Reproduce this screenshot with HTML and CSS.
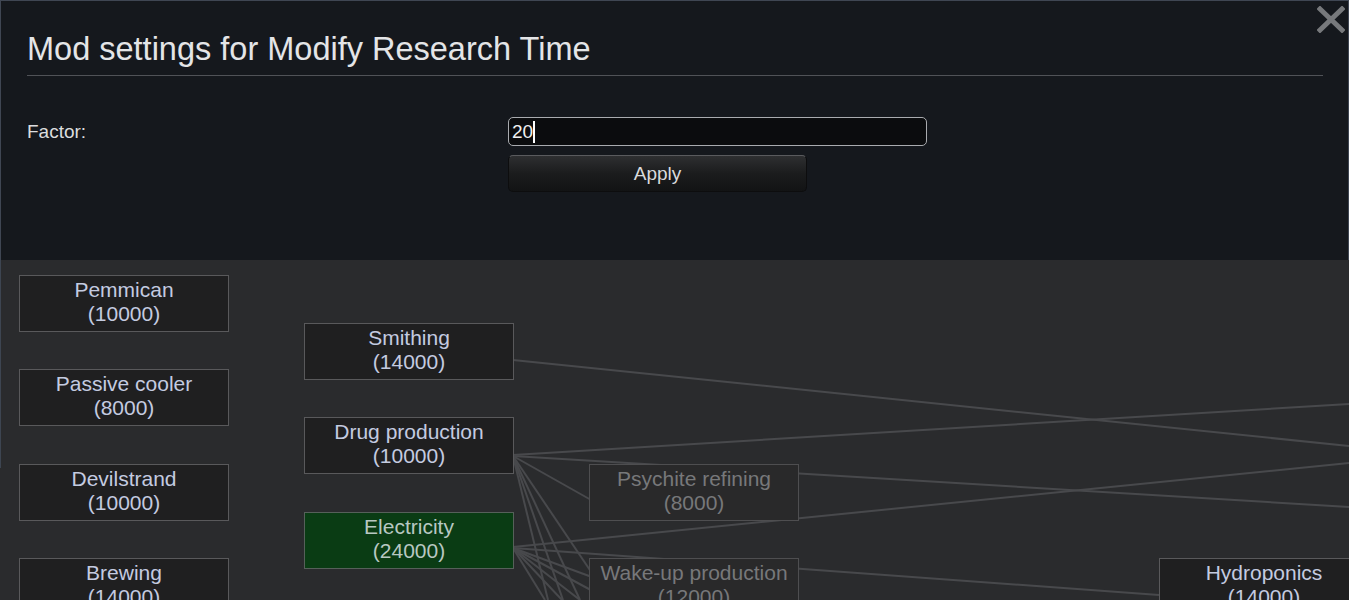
FILE: index.html
```html
<!DOCTYPE html>
<html>
<head>
<meta charset="utf-8">
<link rel="stylesheet" href="styles.css">
</head>
<body>
<div class="tree">
  <svg class="links" width="1349" height="600" viewBox="0 0 1349 600">
    <g stroke="#48494c" stroke-width="2" fill="none">
      <line x1="513" y1="360" x2="1349" y2="446"/>
      <line x1="513" y1="455" x2="1349" y2="404"/>
      <line x1="513" y1="456" x2="1349" y2="507"/>
      <line x1="513" y1="547" x2="1349" y2="463"/>
      <line x1="513" y1="548" x2="1159" y2="595"/>
      <line x1="513" y1="456" x2="600" y2="505"/>
      <line x1="513" y1="456" x2="548" y2="600"/>
      <line x1="513" y1="456" x2="563" y2="600"/>
      <line x1="513" y1="456" x2="580" y2="600"/>
      <line x1="513" y1="456" x2="600" y2="585"/>
      <line x1="513" y1="548" x2="545" y2="600"/>
      <line x1="513" y1="548" x2="562" y2="600"/>
      <line x1="513" y1="548" x2="580" y2="600"/>
      <line x1="513" y1="548" x2="600" y2="595"/>
      <line x1="513" y1="548" x2="600" y2="580"/>
    </g>
  </svg>

  <div class="node n-c1 n-r1">Pemmican<br>(10000)</div>
  <div class="node n-c1 n-r2">Passive cooler<br>(8000)</div>
  <div class="node n-c1 n-r3">Devilstrand<br>(10000)</div>
  <div class="node n-c1 n-r4">Brewing<br>(14000)</div>

  <div class="node n-c2 n-s1">Smithing<br>(14000)</div>
  <div class="node n-c2 n-s2">Drug production<br>(10000)</div>
  <div class="node n-c2 n-s3 done">Electricity<br>(24000)</div>

  <div class="node n-c3 n-r3 locked">Psychite refining<br>(8000)</div>
  <div class="node n-c3 n-r4 locked">Wake-up production<br>(12000)</div>

  <div class="node n-c5 n-r4">Hydroponics<br>(14000)</div>

  <div class="edge-line"></div>
</div>

<div class="dialog">
  <div class="dialog-head">
    <h1 class="title">Mod settings for Modify Research Time</h1>
  </div>
  <div class="form">
    <label class="label">Factor:</label>
    <div class="controls">
      <div class="input"><span class="value">20</span><span class="caret"></span></div>
      <button class="btn">Apply</button>
    </div>
  </div>
  <div class="close">
    <svg width="28" height="27" viewBox="0 0 28 27">
      <path d="M3 3 L25 24 M25 3 L3 24" stroke="#77797c" stroke-width="5" stroke-linecap="square" fill="none"/>
    </svg>
  </div>
</div>
</body>
</html>
```

FILE: styles.css
```css
html, body {
  margin: 0;
  padding: 0;
}
body {
  width: 1349px;
  height: 600px;
  overflow: hidden;
  background: #2a2b2d;
  font-family: "Liberation Sans", Arial, sans-serif;
  position: relative;
}
.tree {
  position: relative;
  width: 1349px;
  height: 600px;
}
.links {
  position: absolute;
  left: 0;
  top: 0;
}
.node {
  position: absolute;
  width: 208px;
  height: 52px;
  padding-bottom: 3px;
  border: 1px solid #59595b;
  background: #1f1f20;
  color: #c4cbe0;
  font-size: 21px;
  line-height: 24px;
  text-align: center;
  display: flex;
  align-items: center;
  justify-content: center;
  white-space: nowrap;
}
.n-c1 { left: 19px; }
.n-c2 { left: 304px; }
.n-c3 { left: 589px; }
.n-c5 { left: 1159px; }
.n-r1 { top: 275px; }
.n-r2 { top: 369px; }
.n-r3 { top: 464px; }
.n-r4 { top: 558px; }
.n-s1 { top: 323px; }
.n-s2 { top: 417px; }
.n-s3 { top: 512px; }
.node.done {
  background: #0a3c14;
  border-color: #56605a;
  color: #b8c8c2;
}
.node.locked {
  background: #29292a;
  border-color: #4e4e50;
  color: #77787a;
}
.edge-line {
  position: absolute;
  left: 0;
  top: 0;
  width: 1px;
  height: 468px;
  background: #3d4551;
}

.dialog {
  position: absolute;
  left: 0;
  top: 0;
  width: 1296px;
  height: 259px;
  background: #15181d;
  border: 1px solid #3f4653;
  border-bottom: none;
  padding: 0 25px 0 26px;
  box-sizing: content-box;
}
.dialog-head {
  padding-top: 28px;
  padding-bottom: 6px;
  border-bottom: 1px solid #505257;
}
.title {
  margin: 0;
  font-weight: normal;
  font-size: 32.5px;
  line-height: 40px;
  color: #e4e5e7;
}
.form {
  margin-top: 41px;
  display: grid;
  grid-template-columns: 481px 419px;
}
.label {
  font-size: 19px;
  line-height: 30px;
  color: #dcdddf;
}
.controls {
  display: flex;
  flex-direction: column;
  gap: 9px;
}
.input {
  height: 27px;
  border: 1px solid #a9abaf;
  border-radius: 5px;
  background: #0b0c0e;
  display: flex;
  align-items: center;
  padding-left: 3px;
  box-sizing: content-box;
  width: 414px;
}
.value {
  font-size: 19px;
  color: #f0f0f0;
}
.caret {
  width: 2px;
  height: 22px;
  background: #ffffff;
}
.btn {
  width: 299px;
  height: 37px;
  border: 1px solid #0d0d0e;
  border-top-color: #5a5b5e;
  border-radius: 5px;
  background: linear-gradient(#2e2f31, #1b1c1d 50%, #121314);
  color: #d9dadc;
  font-family: "Liberation Sans", Arial, sans-serif;
  font-size: 19px;
  padding: 0;
}
.close {
  position: absolute;
  right: 3px;
  top: 5px;
  line-height: 0;
}
```
